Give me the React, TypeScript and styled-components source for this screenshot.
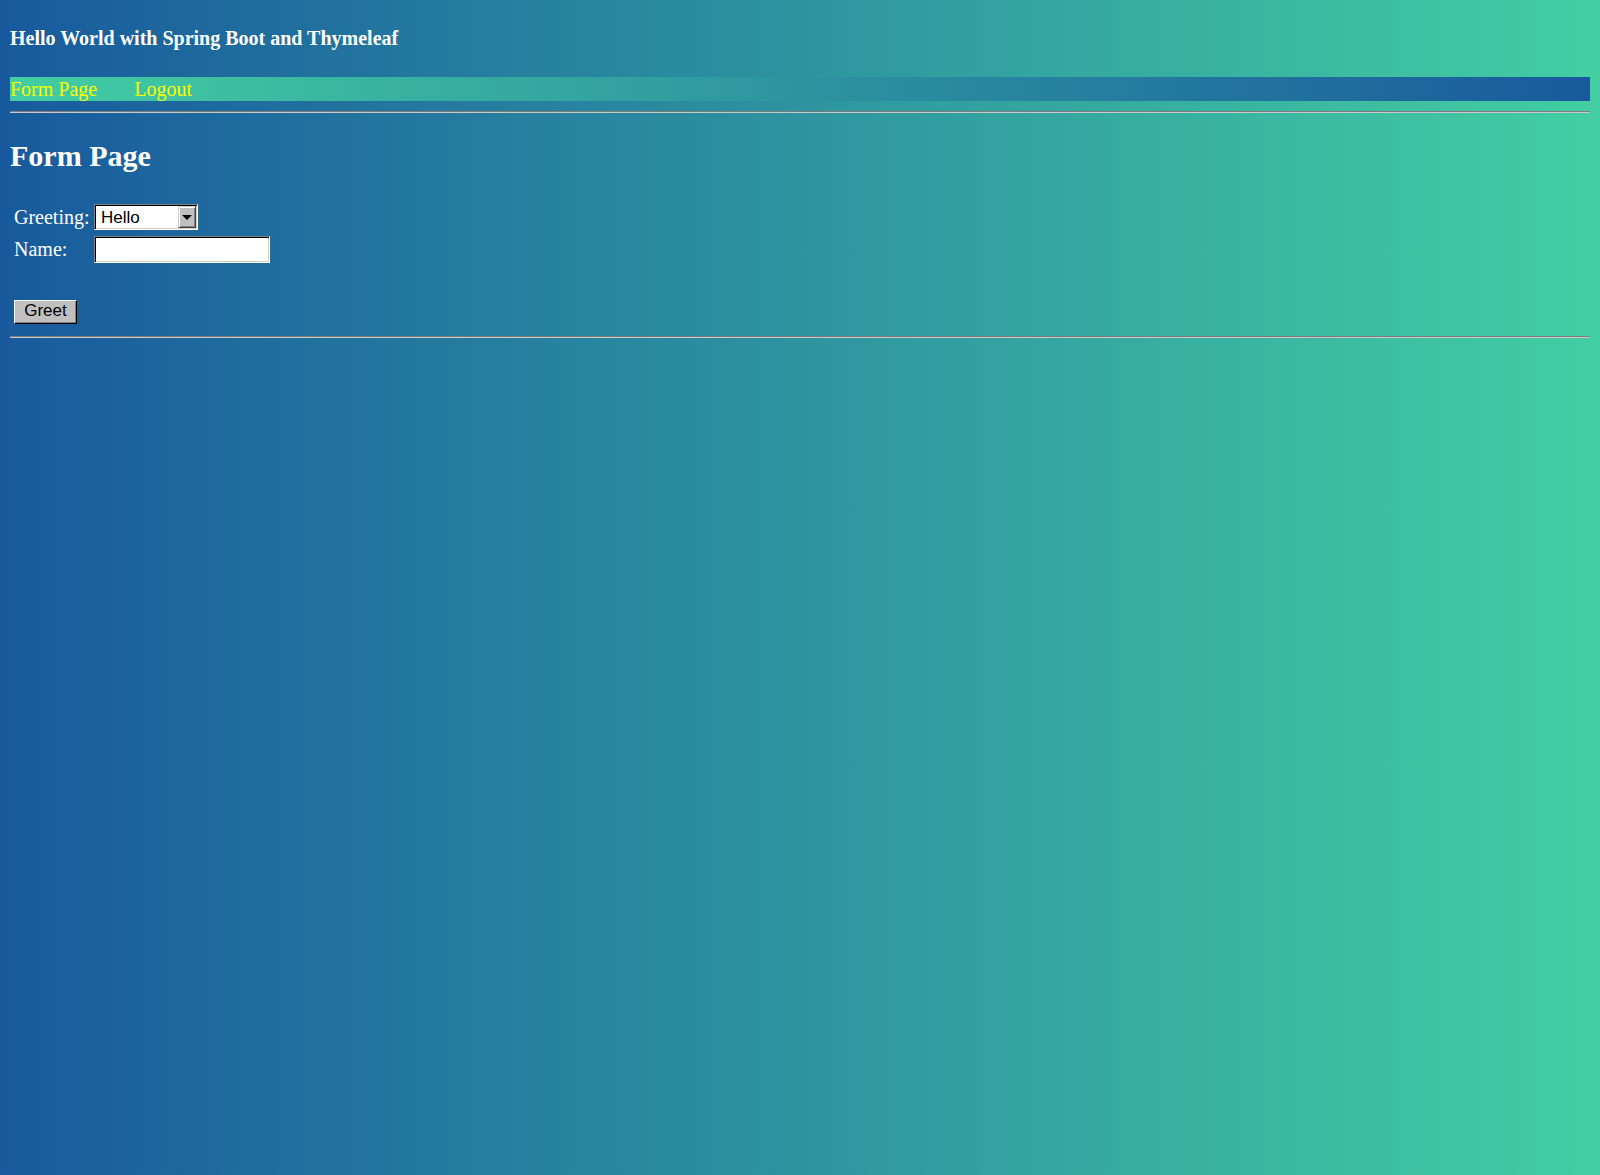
import React, { FC } from 'react'
import styled, { createGlobalStyle } from 'styled-components'

const GlobalStyle = createGlobalStyle`
    html, body {
        min-height: 100%;
    }
    body {
        margin: 10px;
        background: linear-gradient(to right, #185a9d, #43cea2);
        color: #ffffff;
        font-family: "Liberation Serif", "Times New Roman", serif;
        font-size: 20px;
    }
`;

const Title = styled.h4`
    margin: 17px 0 27px;
    font-size: 20px;
    font-weight: 700;
    line-height: 23px;
`;

const Nav = styled.div`
    display: flex;
    gap: 37px;
    height: 24px;
    line-height: 24px;
    background: linear-gradient(to right, #43cea2, #185a9d);
    a {
        color: #ffff00;
        text-decoration: none;
    }
`;

const Rule = styled.hr<{ $top: number }>`
    margin: ${p => p.$top}px 0 0;
    height: 0;
    border: none;
    border-top: 1px solid #7c7c7c;
    border-bottom: 1px solid #c9c9c9;
`;

const Heading = styled.h2`
    margin: 25px 0 0;
    font-size: 30px;
    font-weight: 700;
    line-height: 35px;
`;

const FormGrid = styled.form`
    display: grid;
    grid-template-columns: 80px auto;
    row-gap: 6px;
    justify-content: start;
    align-items: center;
    margin: 31px 0 0 4px;
`;

const Label = styled.label`
    line-height: 23px;
`;

const inset = `
    box-sizing: border-box;
    border: 1px solid;
    border-color: #808080 #ffffff #ffffff #808080;
    box-shadow: inset 1px 1px 0 #000000, inset -1px -1px 0 #d4d0c8;
    background: #ffffff;
`;

const SelectWrap = styled.div`
    position: relative;
    width: 104px;
    height: 26px;
`;

const Select = styled.select`
    ${inset}
    appearance: none;
    width: 100%;
    height: 100%;
    padding: 0 0 0 6px;
    font-family: "Liberation Sans", Arial, sans-serif;
    font-size: 17px;
    color: #000000;
    outline: none;
    border-radius: 0;
`;

const ArrowButton = styled.span`
    position: absolute;
    top: 2px;
    right: 2px;
    width: 18px;
    height: 22px;
    box-sizing: border-box;
    background: #c0c0c0;
    border: 1px solid;
    border-color: #d4d0c8 #404040 #404040 #d4d0c8;
    box-shadow: inset 1px 1px 0 #ffffff, inset -1px -1px 0 #808080;
    display: flex;
    align-items: center;
    justify-content: center;
    pointer-events: none;
    &::after {
        content: '';
        border-left: 5px solid transparent;
        border-right: 5px solid transparent;
        border-top: 5px solid #000000;
    }
`;

const TextInput = styled.input`
    ${inset}
    width: 176px;
    height: 27px;
    padding: 0 4px;
    font-family: "Liberation Sans", Arial, sans-serif;
    font-size: 17px;
    outline: none;
`;

const Actions = styled.div`
    grid-column: 1 / span 2;
    margin-top: 29px;
`;

const Button = styled.button`
    box-sizing: border-box;
    width: 63px;
    height: 24px;
    padding: 0 0 1px;
    background: #c0c0c0;
    border: 1px solid;
    border-color: #ffffff #000000 #000000 #ffffff;
    box-shadow: inset -1px -1px 0 #808080;
    font-family: "Liberation Sans", Arial, sans-serif;
    font-size: 17px;
    color: #000000;
    border-radius: 0;
`;

const App: FC = () => {
    return (
        <>
            <GlobalStyle />
            <Title>Hello World with Spring Boot and Thymeleaf</Title>
            <Nav>
                <a href="#">Form Page</a>
                <a href="#">Logout</a>
            </Nav>
            <Rule $top={10} />
            <Heading>Form Page</Heading>
            <FormGrid onSubmit={e => e.preventDefault()}>
                <Label htmlFor="greeting">Greeting:</Label>
                <SelectWrap>
                    <Select id="greeting" defaultValue="Hello">
                        <option>Hello</option>
                        <option>Hi</option>
                        <option>Hola</option>
                    </Select>
                    <ArrowButton />
                </SelectWrap>
                <Label htmlFor="name">Name:</Label>
                <TextInput id="name" type="text" />
                <Actions>
                    <Button type="submit">Greet</Button>
                </Actions>
            </FormGrid>
            <Rule $top={12} />
        </>
    )
}

export default App;
